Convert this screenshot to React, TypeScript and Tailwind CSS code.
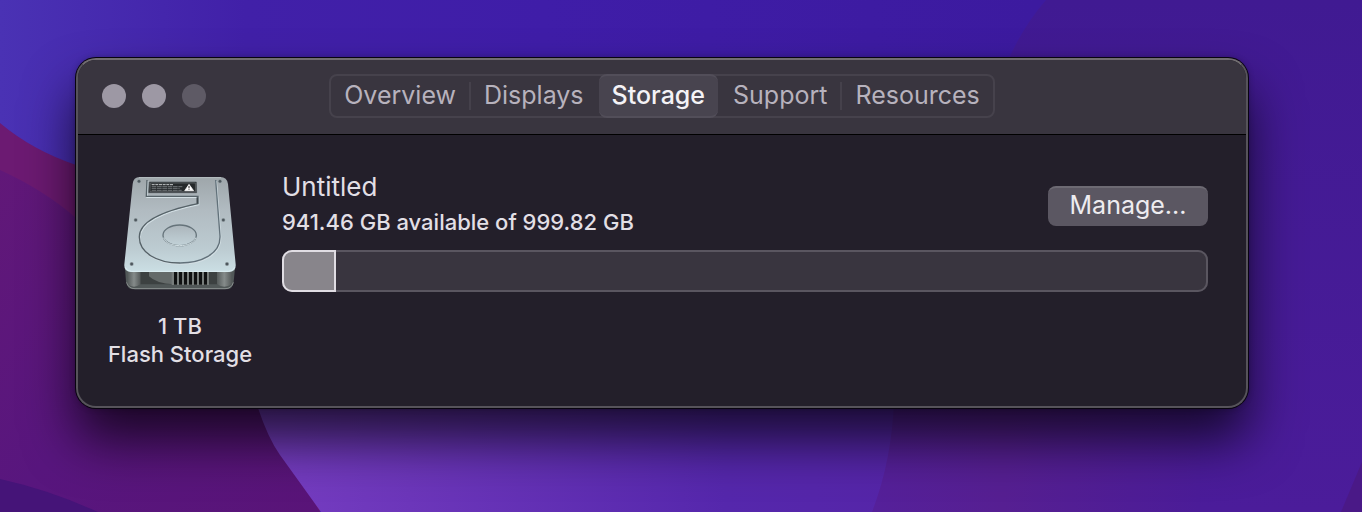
import { useState } from "react";

const tabs = ["Overview", "Displays", "Storage", "Support", "Resources"];

const disk = {
  name: "Untitled",
  available: 941.46,
  total: 999.82,
};

function Wallpaper() {
  return (
    <svg
      className="absolute inset-0 w-full h-full"
      viewBox="0 0 1362 512"
      preserveAspectRatio="none"
      aria-hidden="true"
    >
      <defs>
        <linearGradient id="sky" x1="0" y1="0" x2="1" y2="0">
          <stop offset="0" stopColor="#4a32b4" />
          <stop offset="0.18" stopColor="#4120a8" />
          <stop offset="0.4" stopColor="#3f1da8" />
          <stop offset="0.76" stopColor="#3c1a9f" />
        </linearGradient>
        <linearGradient id="right" x1="0" y1="0" x2="0" y2="1">
          <stop offset="0" stopColor="#401a92" />
          <stop offset="1" stopColor="#4b1c9a" />
        </linearGradient>
        <linearGradient id="plum" x1="0" y1="0" x2="1" y2="1">
          <stop offset="0" stopColor="#611878" />
          <stop offset="0.5" stopColor="#58167e" />
          <stop offset="1" stopColor="#591478" />
        </linearGradient>
        <linearGradient id="violet" x1="0" y1="0" x2="1" y2="0">
          <stop offset="0" stopColor="#7a40c4" />
          <stop offset="0.3" stopColor="#6c36ba" />
          <stop offset="0.75" stopColor="#5527ac" />
          <stop offset="1" stopColor="#5525a8" />
        </linearGradient>
        <linearGradient id="orchid" x1="0" y1="0" x2="1" y2="0">
          <stop offset="0" stopColor="#55209a" />
          <stop offset="0.4" stopColor="#561f92" />
          <stop offset="1" stopColor="#4b1c98" />
        </linearGradient>
      </defs>
      <rect width="1362" height="512" fill="url(#sky)" />
      <path d="M1046 0 Q1020 30 1004 70 L880 512 H1362 V0Z" fill="url(#right)" />
      <path d="M0 123 Q32 150 76 165 L300 400 L320 512 H0Z" fill="#6c1a72" />
      <path d="M0 170 Q44 190 76 218 L255 400 L320 512 H0Z" fill="url(#plum)" />
      <path d="M0 479 Q50 490 98 512 H0Z" fill="#451478" />
      <path d="M200 300 L258 408 Q268 438 280 455 L321 512 H900 V300Z" fill="url(#violet)" />
      <path d="M894 400 Q892 460 872 512 H1200 V400Z" fill="url(#orchid)" />
      <path d="M1362 462 L1341 512 H1362Z" fill="#4a1987" />
    </svg>
  );
}

function DriveIcon() {
  const screws = [
    [88, 49],
    [331, 49],
    [78, 165],
    [341, 165],
    [66, 297],
    [352, 297],
  ];

  return (
    <svg
      className="w-[115px] h-[117px]"
      viewBox="40 30 345 351"
      role="img"
      aria-label="Hard drive"
    >
      <defs>
        <linearGradient id="lid" x1="0" y1="0" x2="0" y2="1">
          <stop offset="0" stopColor="#9ea6aa" />
          <stop offset="0.35" stopColor="#b1bbc1" />
          <stop offset="0.75" stopColor="#bccbd1" />
          <stop offset="1" stopColor="#cbdfe4" />
        </linearGradient>
        <linearGradient id="platter" x1="0" y1="0" x2="0" y2="1">
          <stop offset="0" stopColor="#abb5bb" />
          <stop offset="1" stopColor="#c2d2d8" />
        </linearGradient>
        <linearGradient id="post" x1="0" y1="0" x2="1" y2="0">
          <stop offset="0" stopColor="#555b5b" />
          <stop offset="0.5" stopColor="#858b8a" />
          <stop offset="1" stopColor="#555a5a" />
        </linearGradient>
      </defs>

      {/* base */}
      <path
        d="M46 310 H376 L372 350 Q370 373 348 373 H74 Q52 373 49 350Z"
        fill="#515858"
      />
      <path d="M51 352 Q56 371 76 371 H346 Q366 371 371 352" fill="none" stroke="#8b9190" strokeWidth="3" />
      <path d="M92 318 H330 V358 H92Z" fill="#3c4141" />
      <path d="M118 318 H192 V358 Q140 356 118 334Z" fill="#646a69" />
      <rect x="186" y="318" width="112" height="42" fill="#777d7b" />
      {[193, 208, 223, 238, 253, 268, 283].map((x) => (
        <rect key={x} x={x} y="320" width="9" height="39" fill="#101212" />
      ))}
      <path d="M54 312 H92 V358 Q73 372 54 358Z" fill="url(#post)" />
      <path d="M322 312 H366 V358 Q344 372 322 358Z" fill="url(#post)" />

      {/* lid */}
      <path
        d="M90 36 H332 Q352 36 355 57 L378 298 Q380 321 358 321 H64 Q42 321 44 298 L69 57 Q71 36 90 36Z"
        fill="url(#lid)"
      />
      <path d="M47 307 Q51 319 66 319 H356 Q371 319 375 307" fill="none" stroke="#dceef2" strokeWidth="3" />
      <path d="M88 38 H334" stroke="#c3cacd" strokeWidth="2" />
      {screws.map(([x, y]) => (
        <g key={`${x}-${y}`}>
          <circle cx={x} cy={y} r="6" fill="#8b969b" />
          <circle cx={x} cy={y} r="4" fill="#4d575d" />
        </g>
      ))}

      {/* head arm and platter outline */}
      <path
        d="M112 45 L110 94 H265 V116 C196 130 89 157 89 216 C89 262 139 294 211 294 C273 294 333 268 331 213 L318 45"
        fill="none"
        stroke="#d3dfe4"
        strokeWidth="4"
        transform="translate(2 3)"
      />
      <path
        d="M112 45 L110 94 H265 V116 C196 130 89 157 89 216 C89 262 139 294 211 294"
        fill="none"
        stroke="#566268"
        strokeWidth="4"
      />
      <path
        d="M211 294 C273 294 333 268 331 213 L318 45"
        fill="none"
        stroke="#62717a"
        strokeWidth="4"
      />
      <path d="M263 97 V116" stroke="#3f484d" strokeWidth="5" />
      <ellipse cx="210" cy="211" rx="50" ry="31" fill="url(#platter)" stroke="#65737a" strokeWidth="4" />
      <path d="M162 218 C170 250 250 250 258 218" fill="none" stroke="#d8e5e9" strokeWidth="3" />

      {/* warning label */}
      <path d="M119 51 H260 L261 83 H117Z" fill="#25292b" stroke="#4d5559" strokeWidth="2" />
      <path d="M122 54 H257 L258 80 H121Z" fill="none" stroke="#aeb4b7" strokeWidth="1" />
      <path d="M126 59 H192" stroke="#c9cdce" strokeWidth="3" strokeDasharray="9 2" />
      <path d="M126 65 H218 M126 70 H210 M126 76 H216" stroke="#969c9f" strokeWidth="2" strokeDasharray="14 2" />
      <path d="M238 58 L252 77 H225Z" fill="#fff" stroke="#fff" strokeWidth="2" strokeLinejoin="round" />
      <path d="M238 63 V70 M238 73 V75" stroke="#222" strokeWidth="3" />
    </svg>
  );
}

export default function App() {
  const [active, setActive] = useState("Storage");
  const used = ((disk.total - disk.available) / disk.total) * 100;

  return (
    <main className="relative min-h-screen overflow-hidden pt-[58px] pb-[104px] pl-[76px] pr-[114px] font-['Inter','Liberation_Sans',sans-serif] text-[#e2dfe5]">
      <Wallpaper />

      <div className="relative rounded-[20px] border-2 border-[#56535a] border-t-[#716d70] bg-[#231f2a] shadow-[0_0_0_1px_#08040f,0_0_6px_rgba(0,0,0,0.3),0_32px_52px_rgba(0,0,0,0.7)]">
        <header className="flex items-center h-[75px] px-6 pb-0.5 rounded-t-[18px] border-b border-black bg-[#39353f]">
          <div className="flex flex-1 gap-4">
            <button aria-label="Close" className="size-6 rounded-full bg-[#9d98a4]"></button>
            <button aria-label="Minimize" className="size-6 rounded-full bg-[#9d98a4]"></button>
            <button aria-label="Zoom" disabled className="size-6 rounded-full bg-[#5e5a65]"></button>
          </div>

          <nav className="flex items-center h-11 rounded-lg border-2 border-[#46424c] text-[25px] leading-8 text-[#b7b2bd]">
            {tabs.map((tab, i) => (
              <div key={tab} className="flex items-center">
                {i > 0 && (
                  <span
                    className={
                      tab === active || tabs[i - 1] === active
                        ? "w-0.5 h-7"
                        : "w-0.5 h-7 bg-[#45414b]"
                    }
                  ></span>
                )}
                <button
                  onClick={() => setActive(tab)}
                  aria-pressed={tab === active}
                  className={
                    tab === active
                      ? "h-11 px-[13px] pb-0.5 rounded-lg border-y-2 border-[#524e59] bg-[#48444f] font-medium text-[#f4f2f6]"
                      : "h-11 px-[13px] pb-0.5"
                  }
                >
                  {tab}
                </button>
              </div>
            ))}
          </nav>

          <div className="flex-1"></div>
        </header>

        <div className="flex gap-[30px] pt-9 pb-[38px] pl-[30px] pr-[38px]">
          <div className="flex flex-col items-center w-36 shrink-0 pt-1">
            <DriveIcon />
            <p className="mt-5 text-center text-[22px] leading-7 font-medium whitespace-nowrap">
              1 TB
              <br />
              Flash Storage
            </p>
          </div>

          <div className="flex-1">
            <div className="flex items-start justify-between">
              <div>
                <h1 className="text-[26px] leading-8">{disk.name}</h1>
                <p className="mt-1 text-[22px] leading-[30px] font-medium">
                  {disk.available} GB available of {disk.total} GB
                </p>
              </div>
              <button className="w-40 h-10 mt-[15px] pb-1 rounded-lg border-t-2 border-[#6d6a73] bg-[#5b5762] text-[25px] leading-8 text-[#eeecf0]">
                Manage...
              </button>
            </div>

            <div
              role="meter"
              aria-label="Storage used"
              aria-valuemin={0}
              aria-valuemax={100}
              aria-valuenow={Math.round(used)}
              className="flex mt-[13px] h-[42px] rounded-[10px] bg-[#39353f] ring-2 ring-inset ring-[#5a5660]"
            >
              <div
                className="rounded-l-[10px] border-2 border-[#e0dde3] bg-[#88858b]"
                style={{ width: `${used}%` }}
              ></div>
            </div>
          </div>
        </div>
      </div>
    </main>
  );
}
